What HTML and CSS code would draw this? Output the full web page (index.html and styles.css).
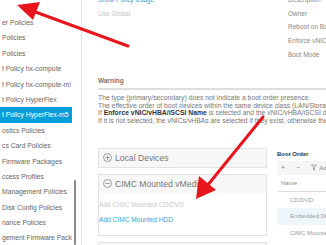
FILE: index.html
```html
<!DOCTYPE html>
<html lang="en">
<head>
<meta charset="UTF-8">
<meta name="viewport" content="width=device-width, initial-scale=1.0">
<title>Boot Policy HyperFlex-m5</title>
<link rel="stylesheet" href="styles.css">
</head>
<body>
<div class="app">
    <div class="sidebar">
        <ul class="nav">
            <li>er Policies</li>
            <li>Policies</li>
            <li>Policies</li>
            <li>t Policy hx-compute</li>
            <li>t Policy hx-compute-m!</li>
            <li>t Policy HyperFlex</li>
            <li class="selected">t Policy HyperFlex-m5</li>
            <li>ostics Policies</li>
            <li>cs Card Policies</li>
            <li>Firmware Packages</li>
            <li>ccess Profiles</li>
            <li>Management Policies</li>
            <li>Disk Config Policies</li>
            <li>nance Policies</li>
            <li>gement Firmware Packages</li>
        </ul>
        <div class="scroll"><div class="thumb"></div></div>
    </div>

    <div class="main">
        <div class="props">
            <div class="props-left">
                <div class="row"><a href="#">Show Policy Usage</a></div>
                <div class="row muted">Use Global</div>
            </div>
            <div class="props-right">
                <div class="row">Description</div>
                <div class="row">Owner</div>
                <div class="row">Reboot on Boot Order Change</div>
                <div class="row">Enforce vNIC/vHBA/iSCSI Name</div>
                <div class="row">Boot Mode</div>
            </div>
        </div>

        <div class="warning">
            <h3>Warning</h3>
            <p>The type (primary/secondary) does not indicate a boot order presence.</p>
            <p>The effective order of boot devices within the same device class (LAN/Storage/iSCSI) is determined by PCIe bus scan order.</p>
            <p>If <b>Enforce vNIC/vHBA/iSCSI Name</b> is selected and the vNIC/vHBA/iSCSI does not exist, a config error will be reported.</p>
            <p>If it is not selected, the vNICs/vHBAs are selected if they exist, otherwise the vNIC/vHBA with the lowest PCIe bus scan order is used.</p>
        </div>

        <div class="boot">
            <div class="devices">
                <div class="panel">
                    <div class="panel-head">
                        <svg width="9" height="9" viewBox="0 0 9 9"><circle cx="4.5" cy="4.5" r="4" fill="none" stroke="#888" stroke-width="0.8"/><path d="M2.3 4.5h4.4M4.5 2.3v4.4" stroke="#888" stroke-width="0.8"/></svg>
                        Local Devices
                    </div>
                </div>
                <div class="panel">
                    <div class="panel-head">
                        <svg width="9" height="9" viewBox="0 0 9 9"><circle cx="4.5" cy="4.5" r="4" fill="none" stroke="#888" stroke-width="0.8"/><path d="M2.3 4.5h4.4" stroke="#888" stroke-width="0.8"/></svg>
                        CIMC Mounted vMedia
                    </div>
                    <div class="panel-body">
                        <div class="add disabled">Add CIMC Mounted CD/DVD</div>
                        <div class="add">Add CIMC Mounted HDD</div>
                    </div>
                </div>
                <div class="panel">
                    <div class="panel-head">
                        <svg width="9" height="9" viewBox="0 0 9 9"><circle cx="4.5" cy="4.5" r="4" fill="none" stroke="#888" stroke-width="0.8"/><path d="M2.3 4.5h4.4M4.5 2.3v4.4" stroke="#888" stroke-width="0.8"/></svg>
                        vNICs
                    </div>
                </div>
            </div>

            <div class="order">
                <h3>Boot Order</h3>
                <div class="toolbar">
                    <span>+</span>
                    <span>&minus;</span>
                    <span class="filter">
                        <svg width="7" height="7" viewBox="0 0 7 7"><path d="M0.5 1h5l-2 2.3v3l-1-0.8v-2.2z" fill="none" stroke="#888" stroke-width="0.7"/></svg>Advanced Filter
                    </span>
                </div>
                <div class="th">Name</div>
                <div class="tr">CD/DVD</div>
                <div class="tr hl">Embedded Disk</div>
                <div class="tr">CIMC Mounted HDD</div>
            </div>
        </div>
    </div>
</div>

<svg class="arrow" width="326" height="245" viewBox="0 0 326 245">
    <path d="M128 46 L30 10" stroke="#e8161c" stroke-width="3" stroke-linecap="round"/>
    <path d="M17 5 L40 2 L33 20 Z" fill="#e8161c"/>
    <path d="M263 117 L207 186" stroke="#e8161c" stroke-width="3" stroke-linecap="round"/>
    <path d="M196 199 L199 176 L216 190 Z" fill="#e8161c"/>
</svg>
</body>
</html>
```

FILE: styles.css
```css
body {
    margin: 0;
    width: 326px;
    height: 245px;
    overflow: hidden;
    font-family: "Liberation Sans", Arial, sans-serif;
    background-color: #fff;
    color: #666;
}

.app {
    display: flex;
    height: 245px;
}

.sidebar {
    display: flex;
    width: 81px;
    flex-shrink: 0;
    border-right: 1px solid #e4e4e4;
    overflow: hidden;
}

.nav {
    list-style: none;
    margin: 0;
    padding: 15px 0 0 0;
    width: 72px;
    flex-shrink: 0;
    overflow: hidden;
}

.nav li {
    height: 15.4px;
    line-height: 15.4px;
    padding-left: 2px;
    font-size: 6.8px;
    white-space: nowrap;
    overflow: hidden;
    color: #666;
}

.nav li.selected {
    background-color: #049fd9;
    color: #fff;
}

.scroll {
    width: 9px;
}

.thumb {
    margin: 180px 0 0 2px;
    width: 2px;
    height: 65px;
    background-color: #8a8a8a;
    border-radius: 1px;
}

.main {
    flex: 1;
    min-width: 0;
    padding-left: 16px;
    background-color: #fff;
    overflow: hidden;
}

.props {
    display: flex;
    margin-top: -7px;
    height: 80px;
}

.props-left {
    width: 190px;
    flex-shrink: 0;
}

.props .row {
    height: 13.7px;
    line-height: 13.7px;
    font-size: 6.5px;
    white-space: nowrap;
    color: #888;
}

.props a {
    color: #3d9fd3;
    text-decoration: none;
}

.props .muted {
    color: #c4c4c4;
}

.warning {
    padding-top: 2px;
}

.warning h3 {
    margin: 0;
    font-size: 6.5px;
    line-height: 12px;
    color: #777;
    font-weight: bold;
    border-bottom: 2px solid #dedede;
    padding-bottom: 1px;
}

.warning p {
    margin: 0;
    font-size: 6.8px;
    line-height: 7.7px;
    white-space: nowrap;
    color: #777;
}

.warning p:first-of-type {
    margin-top: 4px;
}

.warning b {
    color: #333;
}

.boot {
    display: flex;
    margin-top: 23px;
}

.devices {
    width: 169px;
    flex-shrink: 0;
}

.panel {
    border: 1px solid #e2e2e2;
    margin-bottom: 6px;
}

.panel-head {
    display: flex;
    align-items: center;
    gap: 3px;
    height: 18px;
    padding-left: 4px;
    background-color: #f7f7f7;
    font-size: 8.6px;
    color: #777;
}

.panel-body {
    padding: 4px 0 8px 0;
}

.add {
    font-size: 6.6px;
    line-height: 15px;
    color: #3d9fd3;
    white-space: nowrap;
}

.add.disabled {
    color: #c9c9c9;
}

.order {
    margin-left: 10px;
    flex: 1;
    min-width: 0;
    margin-top: -1px;
}

.order h3 {
    margin: 0;
    font-size: 6px;
    line-height: 14px;
    color: #333;
    white-space: nowrap;
}

.toolbar {
    display: flex;
    align-items: center;
    gap: 11px;
    height: 14px;
    padding-left: 4px;
    background-color: #f5f5f5;
    font-size: 7px;
    color: #888;
    white-space: nowrap;
}

.filter {
    display: flex;
    align-items: center;
    gap: 1px;
    font-size: 6px;
}

.th {
    height: 16px;
    line-height: 16px;
    padding-left: 4px;
    font-size: 6px;
    color: #888;
    border-bottom: 1px solid #ddd;
}

.tr {
    height: 16.5px;
    line-height: 16.5px;
    padding-left: 13px;
    font-size: 6px;
    color: #999;
    white-space: nowrap;
}

.tr.hl {
    background-color: #eef6fb;
}

.arrow {
    position: absolute;
    top: 0;
    left: 0;
    pointer-events: none;
}
```
